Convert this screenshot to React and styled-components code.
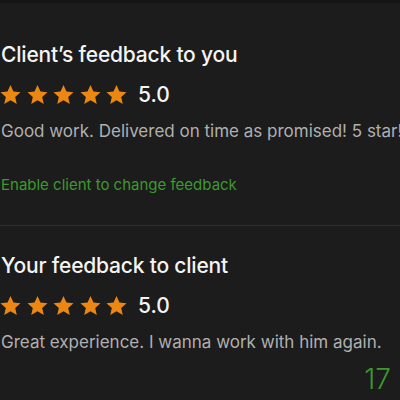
import styled, { createGlobalStyle } from "styled-components";
import React from "react";

const GlobalStyle = createGlobalStyle`
  html, body {
    margin: 0;
    padding: 0;
    background: #1c1c1c;
  }
  body {
    font-family: Inter, "Liberation Sans", Arial, sans-serif;
  }
`;

const Page = styled.div`
  width: 400px;
  height: 400px;
  overflow: hidden;
  background: #1c1c1c;
  border-top: 3px solid #151515;
  box-sizing: border-box;
`;

const Section = styled.section`
  padding: ${(p) => p.$pad || "0"};
  border-bottom: ${(p) => (p.$divider ? "1px solid #2f2f2f" : "none")};
`;

const Title = styled.h2`
  margin: 0;
  padding-left: 1px;
  color: #f4f4f4;
  font-size: 21px;
  font-weight: 500;
  letter-spacing: -0.2px;
  line-height: 24px;
  white-space: nowrap;
`;

const RatingRow = styled.div`
  display: flex;
  align-items: center;
  margin-top: 16px;
`;

const Stars = styled.div`
  display: flex;
  gap: 5.5px;
`;

const Score = styled.span`
  margin-left: 11px;
  color: #f4f4f4;
  font-size: 21px;
  font-weight: 500;
  line-height: 24px;
`;

const Comment = styled.p`
  margin: 14px 0 0;
  padding-left: 1px;
  color: #b0b0b0;
  font-size: 17px;
  line-height: 20px;
  white-space: nowrap;
`;

const ToggleLink = styled.a`
  display: block;
  margin-top: 35px;
  padding-left: 1px;
  color: #3a9b2c;
  font-size: 15px;
  line-height: 18px;
  cursor: pointer;
`;

const PageNumber = styled.div`
  text-align: right;
  padding-right: 9px;
  margin-top: 12px;
  color: #3c9a2e;
  font-size: 28px;
  font-weight: 300;
  line-height: 30px;
`;

function Star() {
  return (
    <svg width="21" height="24" viewBox="1 0 22 24">
      <path
        d="M12 1.5l3.1 6.9 7.4.7-5.6 5 1.7 7.4L12 17.6l-6.6 3.9 1.7-7.4-5.6-5 7.4-.7z"
        fill="#ec8712"
      />
    </svg>
  );
}

function Rating({ value }) {
  return (
    <RatingRow>
      <Stars>
        {[0, 1, 2, 3, 4].map((i) => (
          <Star key={i} />
        ))}
      </Stars>
      <Score>{value.toFixed(1)}</Score>
    </RatingRow>
  );
}

export default function App() {
  return (
    <Page>
      <GlobalStyle />
      <Section $pad="40px 0 31px" $divider>
        <Title>Client’s feedback to you</Title>
        <Rating value={5} />
        <Comment>Good work. Delivered on time as promised! 5 star!</Comment>
        <ToggleLink>Enable client to change feedback</ToggleLink>
      </Section>
      <Section $pad="28px 0 0">
        <Title>Your feedback to client</Title>
        <Rating value={5} />
        <Comment>Great experience. I wanna work with him again.</Comment>
        <PageNumber>17</PageNumber>
      </Section>
    </Page>
  );
}
